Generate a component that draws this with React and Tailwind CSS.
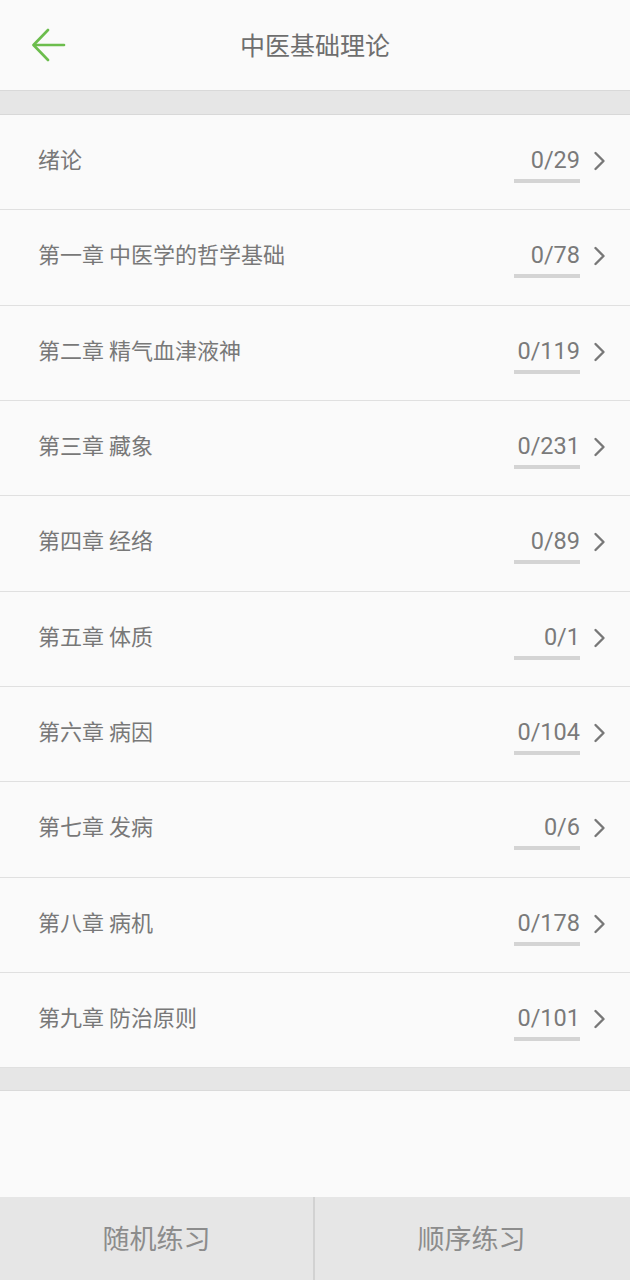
import React from "react";

const rows = [
  ["绪论", "0/29"],
  ["第一章 中医学的哲学基础", "0/78"],
  ["第二章 精气血津液神", "0/119"],
  ["第三章 藏象", "0/231"],
  ["第四章 经络", "0/89"],
  ["第五章 体质", "0/1"],
  ["第六章 病因", "0/104"],
  ["第七章 发病", "0/6"],
  ["第八章 病机", "0/178"],
  ["第九章 防治原则", "0/101"],
];

const cjk = { fontFamily: '"Noto Sans CJK SC", "Noto Sans", sans-serif' };
const num = { fontFamily: 'Roboto, "Noto Sans", sans-serif' };

export default function App() {
  return (
    <div className="w-[630px] h-[1280px] bg-[#fafafa] flex flex-col overflow-hidden" style={cjk}>
      <header className="h-[91px] shrink-0 border-b border-[#d9d9d9] grid grid-cols-[90px_1fr_90px] items-center">
        <div className="pl-[32px] flex items-center">
          <svg width="34" height="34" viewBox="0 0 34 34" fill="none" stroke="#6cbd4d" strokeWidth="2.6" strokeLinecap="round" strokeLinejoin="round">
            <path d="M32 17H2" />
            <path d="M16 2L1.5 17L16 32" />
          </svg>
        </div>
        <div className="text-center text-[25px] text-[#6e6e6e] leading-none -mt-[2px]">中医基础理论</div>
        <div />
      </header>
      <div className="h-[24px] shrink-0 bg-[#e6e6e6] border-b border-[#d8d8d8]" />
      <div className="flex flex-col shrink-0">
        {rows.map(([t, n]) => (
          <div key={t} className="h-[95.33px] border-b border-[#e0e0e0] flex items-center pl-[38px] pr-[24px]">
            <div className="flex-1 text-[22px] leading-[28px] text-[#787878] mb-[8px]">{t}</div>
            <div
              className="w-[66px] h-[38px] mt-[4px] text-right text-[23.5px] leading-[30px] text-[#7a7a7a] border-b-[4px] border-[#d4d4d4]"
              style={num}
            >
              {n}
            </div>
            <svg className="ml-[13px] mb-[2px]" width="13" height="20" viewBox="0 0 13 20" fill="none" stroke="#777" strokeWidth="2.4" strokeLinecap="round" strokeLinejoin="round">
              <path d="M2.5 2L10.5 10L2.5 18" />
            </svg>
          </div>
        ))}
      </div>
      <div className="h-[23px] shrink-0 bg-[#e6e6e6] border-b border-[#dadada]" />
      <div className="flex-1" />
      <div className="h-[83px] shrink-0 bg-[#e6e6e6] grid grid-cols-[315px_1fr] text-[27px] text-[#8c8c8c]">
        <div className="flex items-center justify-center border-r-[2px] border-[#d2d2d2]">随机练习</div>
        <div className="flex items-center justify-center pr-[2px]">顺序练习</div>
      </div>
    </div>
  );
}
